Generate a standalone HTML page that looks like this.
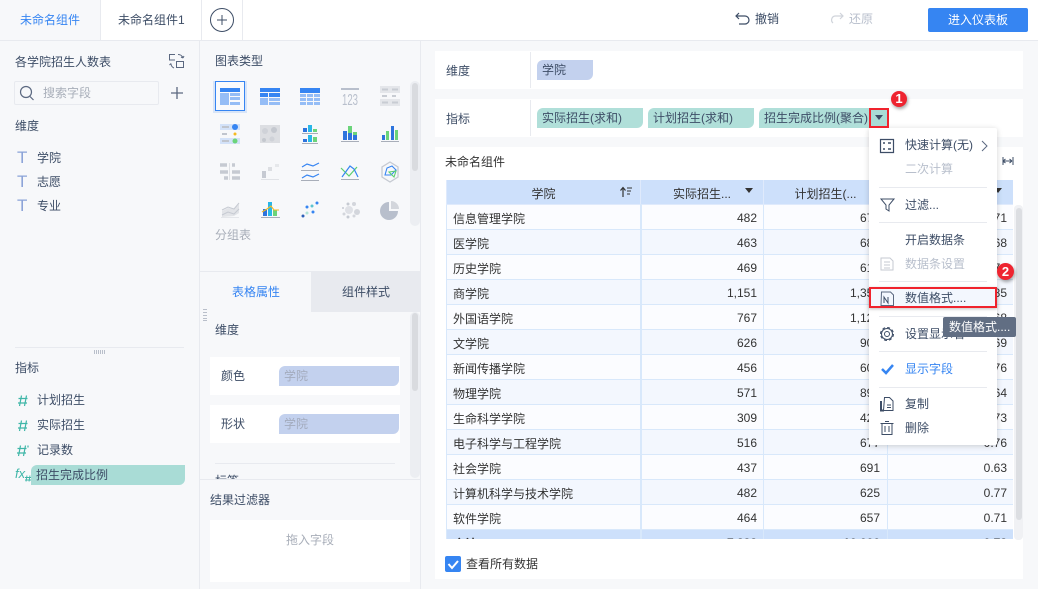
<!DOCTYPE html>
<html lang="zh">
<head>
<meta charset="utf-8">
<style>
*{box-sizing:border-box}
html,body{margin:0;padding:0}
body{width:1038px;height:589px;overflow:hidden;position:relative;background:#f7f8fa;font-family:"Liberation Sans","Noto Sans CJK SC",sans-serif;font-size:12px;color:#3d4d66}
.a{position:absolute}
.t{position:absolute;white-space:nowrap;line-height:16px;height:16px}
.w{background:#fff}
.p{position:absolute;border-radius:6px 0 6px 0;height:20px;line-height:20px;padding-left:5px;white-space:nowrap}
.g{background:#b0dfd9}
.b{background:#c3d1ee}
svg{position:absolute;left:0;top:0}
table{border-collapse:collapse;table-layout:fixed;width:567px;position:absolute;left:0;top:-1px;color:#333}
td,th{height:25px;padding:2px 6px 0;font-weight:400;white-space:nowrap;overflow:hidden;border:1px solid #d8e8fb;text-align:right}
td:first-child{text-align:left;border-right:2px solid #d8e8fb}
td:nth-child(3){padding-right:7px}
tr:nth-child(odd) td{background:#f3f7fe}
tr:nth-child(even) td{background:#fbfcff}
th{background:#cde0fb;border-color:#dfeafc;text-align:center}
tr.tot td{background:#cde0fb;font-weight:700}
.ln{position:absolute;left:10px;width:108px;height:1px;background:#e8eaef}
.m{position:absolute;left:36px;white-space:nowrap;line-height:16px}
</style>
</head>
<body>
<!-- top bar -->
<div class="a w" style="left:0;top:0;width:1038px;height:41px;border-bottom:1px solid #e8eaef"></div>
<div class="a" style="left:0;top:0;width:101px;height:40px;background:#f7f8fa;border-right:1px solid #e8eaef"></div>
<div class="a" style="left:201px;top:0;width:42px;height:40px;border-left:1px solid #e8eaef;border-right:1px solid #e8eaef"></div>
<div class="t" style="left:20px;top:12px;color:#3685f2">未命名组件</div>
<div class="t" style="left:118px;top:12px;color:#3d4d66">未命名组件1</div>
<div class="t" style="left:755px;top:11px">撤销</div>
<div class="t" style="left:849px;top:11px;color:#b8bfcc">还原</div>
<div class="a" style="left:928px;top:8px;width:100px;height:24px;background:#3685f2;border-radius:2px;color:#fff;text-align:center;line-height:24px">进入仪表板</div>

<!-- panels -->
<div class="a" style="left:199px;top:41px;width:1px;height:548px;background:#e8eaef"></div>
<div class="a" style="left:420px;top:41px;width:1px;height:548px;background:#e8eaef"></div>

<!-- left panel -->
<div class="t" style="left:15px;top:54px">各学院招生人数表</div>
<div class="a" style="left:14px;top:81px;width:145px;height:24px;border:1px solid #e8eaef;border-radius:2px"></div>
<div class="t" style="left:43px;top:85px;color:#a8aeb9">搜索字段</div>
<div class="t" style="left:15px;top:118px">维度</div>
<div class="t" style="left:37px;top:150px">学院</div>
<div class="t" style="left:37px;top:174px">志愿</div>
<div class="t" style="left:37px;top:198px">专业</div>
<div class="t" style="left:17px;top:149px;color:#8ba3d8;font-size:17px;line-height:18px">T</div>
<div class="t" style="left:17px;top:173px;color:#8ba3d8;font-size:17px;line-height:18px">T</div>
<div class="t" style="left:17px;top:197px;color:#8ba3d8;font-size:17px;line-height:18px">T</div>
<div class="a" style="left:15px;top:347px;width:169px;height:1px;background:#e8eaef"></div>
<div class="t" style="left:15px;top:360px">指标</div>
<div class="t" style="left:37px;top:392px">计划招生</div>
<div class="t" style="left:37px;top:417px">实际招生</div>
<div class="t" style="left:37px;top:442px">记录数</div>
<div class="t" style="left:15px;top:466px;color:#3fb6a8;font-size:13px;font-style:italic">fx</div>
<div class="p" style="left:31px;top:465px;width:154px;background:#a9dcd6">招生完成比例</div>

<!-- middle panel -->
<div class="t" style="left:215px;top:53px">图表类型</div>
<div class="a" style="left:213px;top:81px;width:34px;height:32px;background:#d8e5f8"></div>
<div class="a" style="left:215px;top:81px;width:30px;height:30px;border:1px solid #3685f2;background:#f9fafc"></div>
<div class="a" style="left:410px;top:81px;width:10px;height:145px;background:#eceef2;border-radius:5px"></div>
<div class="a" style="left:412px;top:83px;width:6px;height:88px;background:#d9dbdf;border-radius:3px"></div>
<div class="t" style="left:215px;top:227px;color:#a8aeb9">分组表</div>

<div class="a" style="left:200px;top:271px;width:220px;height:1px;background:#e8eaef"></div>
<div class="a" style="left:311px;top:271px;width:109px;height:41px;background:#e8eaef"></div>
<div class="t" style="left:232px;top:284px;color:#3685f2">表格属性</div>
<div class="t" style="left:342px;top:284px">组件样式</div>
<div class="t" style="left:215px;top:322px">维度</div>
<div class="a w" style="left:210px;top:357px;width:190px;height:38px"></div>
<div class="a w" style="left:210px;top:405px;width:190px;height:38px"></div>
<div class="t" style="left:221px;top:368px">颜色</div>
<div class="t" style="left:221px;top:416px">形状</div>
<div class="p b" style="left:279px;top:366px;width:120px;color:#a3abbd">学院</div>
<div class="p b" style="left:279px;top:414px;width:120px;color:#a3abbd">学院</div>
<div class="a" style="left:215px;top:463px;width:180px;height:1px;background:#e8eaef"></div>
<div class="t" style="left:215px;top:473px">标签</div>
<div class="a" style="left:410px;top:312px;width:10px;height:166px;background:#eceef2;border-radius:5px"></div>
<div class="a" style="left:412px;top:313px;width:6px;height:78px;background:#d9dbdf;border-radius:3px"></div>
<div class="a" style="left:200px;top:479px;width:220px;height:110px;background:#f7f8fa;border-top:1px solid #e8eaef"></div>
<div class="t" style="left:210px;top:492px">结果过滤器</div>
<div class="a w" style="left:210px;top:520px;width:200px;height:62px"></div>
<div class="t" style="left:286px;top:532px;color:#a8aeb9">拖入字段</div>

<!-- right area -->
<div class="a w" style="left:435px;top:51px;width:588px;height:38px"></div>
<div class="a" style="left:530px;top:52px;width:1px;height:36px;background:#e8eaef"></div>
<div class="t" style="left:446px;top:63px">维度</div>
<div class="p b" style="left:537px;top:60px;width:56px">学院</div>
<div class="a w" style="left:435px;top:99px;width:588px;height:38px"></div>
<div class="a" style="left:530px;top:100px;width:1px;height:36px;background:#e8eaef"></div>
<div class="t" style="left:446px;top:111px">指标</div>
<div class="p g" style="left:537px;top:108px;width:106px">实际招生(求和)</div>
<div class="p g" style="left:648px;top:108px;width:106px">计划招生(求和)</div>
<div class="p g" style="left:759px;top:108px;width:128px;border-radius:6px 0 0 0">招生完成比例(聚合)</div>

<div class="a w" style="left:435px;top:147px;width:588px;height:432px"></div>
<div class="t" style="left:445px;top:154px;color:#333">未命名组件</div>
<div class="a" style="left:446px;top:180px;width:567px;height:359px;overflow:hidden">
<table>
<colgroup><col style="width:194px"><col style="width:123px"><col style="width:124px"><col style="width:126px"></colgroup>
<tr><th>学院</th><th>实际招生...</th><th>计划招生(...</th><th></th></tr>
<tr><td>信息管理学院</td><td>482</td><td>679</td><td>0.71</td></tr>
<tr><td>医学院</td><td>463</td><td>681</td><td>0.68</td></tr>
<tr><td>历史学院</td><td>469</td><td>617</td><td>0.76</td></tr>
<tr><td>商学院</td><td>1,151</td><td>1,354</td><td>0.85</td></tr>
<tr><td>外国语学院</td><td>767</td><td>1,128</td><td>0.68</td></tr>
<tr><td>文学院</td><td>626</td><td>907</td><td>0.69</td></tr>
<tr><td>新闻传播学院</td><td>456</td><td>600</td><td>0.76</td></tr>
<tr><td>物理学院</td><td>571</td><td>892</td><td>0.64</td></tr>
<tr><td>生命科学学院</td><td>309</td><td>423</td><td>0.73</td></tr>
<tr><td>电子科学与工程学院</td><td>516</td><td>677</td><td>0.76</td></tr>
<tr><td>社会学院</td><td>437</td><td>691</td><td>0.63</td></tr>
<tr><td>计算机科学与技术学院</td><td>482</td><td>625</td><td>0.77</td></tr>
<tr><td>软件学院</td><td>464</td><td>657</td><td>0.71</td></tr>
<tr class="tot"><td>合计</td><td>7,333</td><td>10,000</td><td>0.73</td></tr>
</table>
</div>
<div class="a" style="left:1014px;top:205px;width:9px;height:335px;background:#f0f1f4;border-radius:4px"></div>
<div class="a" style="left:1016px;top:208px;width:6px;height:312px;background:#dcdee2;border-radius:3px"></div>
<div class="a" style="left:445px;top:556px;width:16px;height:16px;background:#3685f2;border-radius:2px"></div>
<div class="t" style="left:466px;top:556px;color:#333">查看所有数据</div>

<!-- icons layer -->
<svg width="1038" height="589" viewBox="0 0 1038 589" fill="none">
<!-- plus tab -->
<circle cx="222" cy="20" r="11.5" stroke="#3d4d66"/>
<path d="M217 20h10M222 15v10" stroke="#3d4d66"/>
<!-- undo/redo -->
<path d="M739 15l-3 3 3 3M736 18h9a4 4 0 0 1 0 8h-6" stroke="#3d4d66" stroke-width="1.2" transform="translate(0,-2)"/>
<path d="M840 15l3 3-3 3M843 18h-8a4 4 0 0 0-2 7" stroke="#d0d4db" stroke-width="1.2" transform="translate(0,-2)"/>
<!-- left panel icons -->
<path d="M175 54.500h-5.500v5.500h5.500M178 54.500a5 5 0 0 1 5 3.500M183 58l1-2M183 58l-2-1M171 63.500a5 5 0 0 0 3 4.500M171 63.500l-1.500 1.500M176.500 61.500h7v6h-7z" stroke="#5b6880"/>
<circle cx="26" cy="92" r="5.500" stroke="#5b6880" stroke-width="1.200"/>
<path d="M30 96.500l3.500 3.500" stroke="#5b6880" stroke-width="1.200"/>
<path d="M171 93h12M177 87v12" stroke="#5b6880" stroke-width="1.300"/>
<path d="M94 351h1M96 351h1M98 351h1M100 351h1M102 351h1M104 351h1M94 353h1M96 353h1M98 353h1M100 353h1M102 353h1M104 353h1" stroke="#7b869a"/>
<path d="M204 309v1M206 309v1M204 312v1M206 312v1M204 315v1M206 315v1M204 318v1M206 318v1M204 320v1M206 320v1" stroke="#7b869a"/>
<!-- measure icons -->
<path d="M21.500 395.500l-2 10.500M26.500 395.500l-2 10.500M18.500 398.500h9M18 403h9" stroke="#3fb6a8" stroke-width="1.200"/>
<path d="M21.500 420.500l-2 10.500M26.500 420.500l-2 10.500M18.500 423.500h9M18 428h9" stroke="#3fb6a8" stroke-width="1.200"/>
<path d="M20.500 445.500l-2 10.500M25.500 445.500l-2 10.500M17.500 448.500h9M17 453h9M28 445.500v2" stroke="#3fb6a8" stroke-width="1.200"/>
<path d="M27 475.500l-1 6M30 475.500l-1 6M25 477.500h6M25 480h6" stroke="#3fb6a8" stroke-width=".9"/>
<!-- row 1 -->
<rect x="220" y="88" width="20" height="4" fill="#3685f2"/><rect x="220" y="93" width="9" height="12" fill="#95bdf6"/><rect x="230" y="93" width="10" height="3" fill="#95bdf6"/><rect x="230" y="97" width="10" height="3" fill="#95bdf6"/><rect x="230" y="102" width="10" height="3" fill="#95bdf6"/>
<rect x="260" y="88" width="20" height="4" fill="#3685f2"/><rect x="260" y="93" width="8" height="4" fill="#3685f2"/><rect x="269" y="93" width="11" height="4" fill="#3685f2"/><rect x="260" y="98" width="8" height="7" fill="#95bdf6"/><rect x="269" y="98" width="11" height="3" fill="#95bdf6"/><rect x="269" y="102" width="11" height="3" fill="#95bdf6"/>
<rect x="300" y="88" width="20" height="5" fill="#3685f2"/>
<path d="M300 95.500h6M307 95.500h6M314 95.500h6M300 99.500h6M307 99.500h6M314 99.500h6M300 103.500h6M307 103.500h6M314 103.500h6" stroke="#95bdf6" stroke-width="3"/>
<rect x="341" y="88" width="18" height="2" fill="#b8bfcc"/>
<text x="342" y="105" font-size="16" fill="#b8bfcc" textLength="16" lengthAdjust="spacingAndGlyphs" font-family="Liberation Sans">123</text>
<rect x="380" y="86" width="20" height="7" fill="#e4e6ea"/><rect x="380" y="99" width="20" height="7" fill="#e4e6ea"/>
<path d="M382 89.500h6M382 96h5M382 102.500h6M392 89.500h6M392 96h4M392 102.500h6" stroke="#c8ccd3" stroke-width="2"/>
<!-- row 2 -->
<rect x="220" y="124" width="20" height="6" fill="#d3e2f9"/><rect x="220" y="138" width="20" height="6" fill="#d3e2f9"/>
<path d="M222 127h7M222 134h5M222 141h7" stroke="#c0c5ce" stroke-width="2"/>
<circle cx="235" cy="127" r="3" fill="#3685f2"/><circle cx="235" cy="134" r="1.500" fill="#f5b921"/><circle cx="235" cy="141" r="2.500" fill="#6bd47a"/>
<rect x="260" y="125" width="20" height="18" fill="#dcdee2"/>
<circle cx="265" cy="131" r="3" fill="#cfd2d8"/><circle cx="274" cy="130" r="3" fill="#c4c8cf"/><circle cx="272" cy="139" r="2.500" fill="#cfd2d8"/><circle cx="264" cy="140" r="2" fill="#c4c8cf"/>
<rect x="303" y="128" width="4" height="4" fill="#2d74dd"/><rect x="308" y="125" width="4" height="7" fill="#29b6e8"/><rect x="313" y="129" width="4" height="3" fill="#6bd47a"/>
<rect x="302" y="133" width="16" height="1" fill="#a8aeb9"/>
<rect x="303" y="139" width="4" height="3" fill="#2d74dd"/><rect x="308" y="135" width="4" height="7" fill="#29b6e8"/><rect x="313" y="137" width="4" height="5" fill="#6bd47a"/>
<rect x="302" y="143" width="16" height="1" fill="#a8aeb9"/>
<rect x="343" y="131" width="4" height="9" fill="#2d74dd"/><rect x="348" y="133" width="4" height="7" fill="#2d74dd"/><rect x="348" y="126" width="4" height="7" fill="#6bd47a"/><rect x="353" y="135" width="4" height="5" fill="#2d74dd"/><rect x="353" y="132" width="4" height="3" fill="#6bd47a"/>
<rect x="341" y="141" width="18" height="1" fill="#a8aeb9"/>
<rect x="382" y="135" width="3" height="5" fill="#2d74dd"/><rect x="386" y="131" width="3" height="9" fill="#6bd47a"/><rect x="391" y="126" width="3" height="14" fill="#2d74dd"/><rect x="395" y="130" width="3" height="10" fill="#6bd47a"/>
<rect x="381" y="141" width="18" height="1" fill="#a8aeb9"/>
<!-- row 3 -->
<path d="M220 165h7M220 172h8M224 178h4M232 165h3M232 172h8M232 178h8" stroke="#c6cad2" stroke-width="3.500"/>
<path d="M229.500 163v17" stroke="#dfe1e5"/>
<rect x="262" y="171" width="4" height="7" fill="#c6cad2"/><rect x="268" y="167" width="4" height="4" fill="#dcdee2"/><rect x="275" y="164" width="4" height="3" fill="#e6e8eb"/>
<rect x="261" y="179" width="18" height="1" fill="#e0e2e6"/>
<path d="M302 167l5-3 6 2 6-3" stroke="#3685f2" stroke-width="1.200"/><rect x="301" y="170" width="18" height="1" fill="#a8aeb9"/>
<path d="M302 178l5-3 6 2 6-3" stroke="#3685f2" stroke-width="1.200"/><rect x="301" y="180" width="18" height="1" fill="#a8aeb9"/>
<path d="M341 168l8 8 8-9" stroke="#5ccf6e" stroke-width="1.200"/><path d="M342 177l8-11 4 3 4 8" stroke="#3685f2" stroke-width="1.200"/><rect x="341" y="179" width="18" height="1" fill="#a8aeb9"/>
<path d="M390 162l8 5v10l-8 5-8-5v-10z" stroke="#c6cad2" stroke-width="1.300"/><path d="M385 175l2-7 5-2 4 4-5 5z" stroke="#3685f2" stroke-width="1.100"/><path d="M389 172l7-1-2 6z" stroke="#5ccf6e" stroke-width="1.100"/>
<!-- row 4 -->
<path d="M222 211l6-3 6 1 5-5v9l-5 3-12 1z" fill="#e2e4e8"/><path d="M222 210l6-3 6 2 5-6M222 215l6-3 6 2 5-5" stroke="#c6cad2"/><rect x="221" y="217" width="18" height="1" fill="#e4e6ea"/>
<rect x="263" y="209" width="4" height="7" fill="#2d74dd"/><rect x="268" y="202" width="4" height="14" fill="#29b6e8"/><rect x="273" y="210" width="4" height="6" fill="#6bd47a"/>
<path d="M262 212l5-3 4-3 3 4 5 0" stroke="#f5b921" stroke-width="1.100"/><rect x="261" y="217" width="19" height="1" fill="#a8aeb9"/>
<circle cx="303" cy="216" r="1.500" fill="#2d5fb8"/><circle cx="307" cy="213" r="1.500" fill="#b0e3d5"/><circle cx="307" cy="207" r="1.500" fill="#3685f2"/><circle cx="312" cy="206" r="1.500" fill="#5cc4d0"/><circle cx="313" cy="212" r="1.500" fill="#3685f2"/><circle cx="317" cy="203" r="1.500" fill="#3685f2"/>
<circle cx="349" cy="210" r="4" fill="#dfe1e6"/><circle cx="357" cy="212" r="3" fill="#d3d6dc"/><circle cx="348" cy="204" r="1.500" fill="#c6cad2"/><circle cx="354" cy="204" r="2" fill="#d3d6dc"/><circle cx="343" cy="208" r="1" fill="#c6cad2"/><circle cx="344" cy="214" r="1.500" fill="#d3d6dc"/><circle cx="348" cy="217" r="1.500" fill="#c6cad2"/><circle cx="354" cy="216" r="1.500" fill="#d3d6dc"/>
<path d="M389 202a9 9 0 1 0 9 9h-9z" fill="#b8bfcc"/><path d="M391 201a8 8 0 0 1 8 8h-8z" fill="#d3d6dc"/>
<!-- checkbox -->
<path d="M448.500 564l3.500 4 6-7" stroke="#fff" stroke-width="2"/>
<!-- table head icons -->
<path d="M1003 157v8M1003 161h9M1013 157v8M1003 161l2.500-2M1003 161l2.500 2M1012 161l-2.500-2M1012 161l-2.500 2" stroke="#3d4d66"/>
<path d="M623 197v-9M620.500 190.500l2.500-3 2.500 3" stroke="#333" stroke-width="1.200"/><path d="M627 188h5M627 191h4M627 194h3" stroke="#333"/>
<path d="M745 188h8l-4 5z" fill="#333"/>
<path d="M994 188h8l-4 5z" fill="#333"/>
</svg>

<!-- menu -->
<div class="a w" style="left:869px;top:128px;width:128px;height:317px;border-radius:2px;box-shadow:0 1px 6px rgba(0,0,0,.18)">
<div class="m" style="top:9px">快速计算(无)</div>
<div class="m" style="top:33px;color:#b8bfcc">二次计算</div>
<div class="ln" style="top:59px"></div>
<div class="m" style="top:69px">过滤...</div>
<div class="ln" style="top:94px"></div>
<div class="m" style="top:104px">开启数据条</div>
<div class="m" style="top:128px;color:#b8bfcc">数据条设置</div>
<div class="ln" style="top:153px"></div>
<div class="a" style="left:1px;top:159px;width:126px;height:21px;background:#f3f7fe"></div>
<div class="m" style="top:162px">数值格式....</div>
<div class="ln" style="top:188px"></div>
<div class="m" style="top:198px">设置显示名</div>
<div class="ln" style="top:223px"></div>
<div class="m" style="top:233px;color:#3685f2">显示字段</div>
<div class="ln" style="top:259px"></div>
<div class="m" style="top:268px">复制</div>
<div class="m" style="top:292px">删除</div>
</div>
<div class="a" style="left:869px;top:287px;width:128px;height:21px;border:2px solid #f0232d;box-shadow:0 1px 3px rgba(0,0,0,.25)"></div>
<div class="a" style="left:869px;top:108px;width:20px;height:20px;border:2px solid #f0232d;background:#a9dcd6"></div>
<div class="a" style="left:943px;top:317px;width:73px;height:20px;background:#616e83;border-radius:2px;color:#fff;line-height:20px;padding-left:6px;white-space:nowrap">数值格式....</div>
<div class="a" style="left:891px;top:91px;width:16px;height:16px;border-radius:50%;background:#ee2430;color:#fff;font-weight:700;font-size:13px;text-align:center;line-height:16px;box-shadow:1px 2px 3px rgba(0,0,0,.35)">1</div>
<div class="a" style="left:997px;top:263px;width:17px;height:17px;border-radius:50%;background:#ee2430;color:#fff;font-weight:700;font-size:13px;text-align:center;line-height:17px;box-shadow:1px 2px 3px rgba(0,0,0,.35)">2</div>

<svg width="1038" height="589" viewBox="0 0 1038 589" fill="none">
<path d="M875 115h8l-4 5z" fill="#3d4d66"/>
<path d="M880.500 139.500h13v13h-13z" stroke="#3d4d66" stroke-width="1.200"/><path d="M883 143h2M883 149h2M888 143h3M888 149h3" stroke="#3d4d66" stroke-width="1.400"/>
<path d="M982 141l5 5-5 5" stroke="#5b6880"/>
<path d="M881 199h13l-5 6v6l-3-2v-4z" stroke="#3d4d66"/>
<path d="M881 258h9l3 3v9h-12z" stroke="#c6cad2"/><path d="M884 262h6M884 265h6M884 268h6" stroke="#c6cad2"/>
<path d="M881.500 292h9l3 3v10.500h-12.500z" stroke="#5b6880"/><path d="M884 303v-6l4 6v-6" stroke="#3d4d66"/>
<circle cx="887" cy="334" r="2.500" stroke="#3d4d66"/><circle cx="887" cy="334" r="5.500" stroke="#3d4d66"/><circle cx="887" cy="334" r="6.500" stroke="#3d4d66" stroke-dasharray="3 2.100"/>
<path d="M882 369l4 4 7-8" stroke="#3685f2" stroke-width="2.500"/>
<path d="M884.500 397.500h5l3.500 3.500v9.500h-9.500z" stroke="#3d4d66"/><path d="M881 401v9.500h3" stroke="#3d4d66" stroke-width="2"/><path d="M887 405h4M887 407.500h4" stroke="#3d4d66"/>
<path d="M880.500 423.500h13M882 423.500v11h10v-11M885 421.500h4M885 426v6M889 426v6" stroke="#3d4d66"/>
</svg>
</body>
</html>
